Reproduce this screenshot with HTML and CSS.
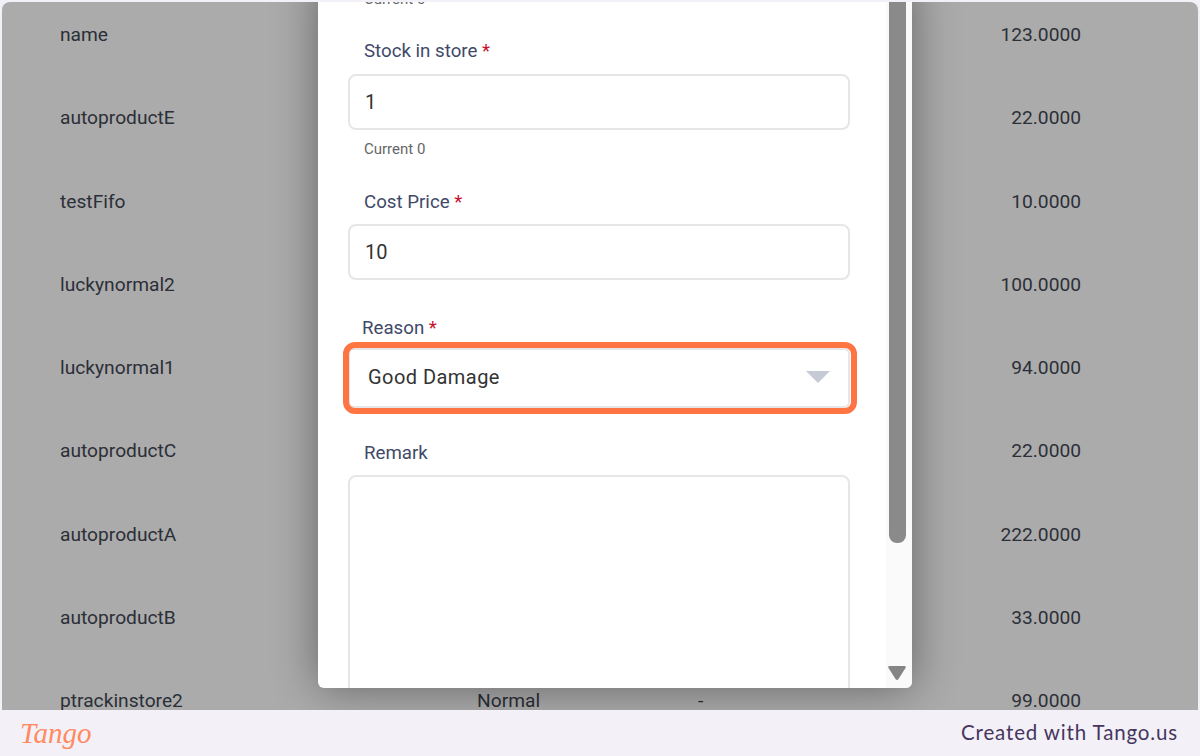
FILE: index.html
```html
<!DOCTYPE html>
<html lang="en">
<head>
    <meta charset="UTF-8">
    <meta name="viewport" content="width=device-width, initial-scale=1.0">
    <title>Stock adjustment</title>
    <link rel="stylesheet" href="styles.css">
</head>
<body>

<div class="shot">
    <!-- Product list behind the dialog -->
    <div class="product-list">
        <div class="product-row"><span>name</span><span></span><span></span><span class="price">123.0000</span></div>
        <div class="product-row"><span>autoproductE</span><span></span><span></span><span class="price">22.0000</span></div>
        <div class="product-row"><span>testFifo</span><span></span><span></span><span class="price">10.0000</span></div>
        <div class="product-row"><span>luckynormal2</span><span></span><span></span><span class="price">100.0000</span></div>
        <div class="product-row"><span>luckynormal1</span><span></span><span></span><span class="price">94.0000</span></div>
        <div class="product-row"><span>autoproductC</span><span></span><span></span><span class="price">22.0000</span></div>
        <div class="product-row"><span>autoproductA</span><span></span><span></span><span class="price">222.0000</span></div>
        <div class="product-row"><span>autoproductB</span><span></span><span></span><span class="price">33.0000</span></div>
        <div class="product-row"><span>ptrackinstore2</span><span>Normal</span><span>-</span><span class="price">99.0000</span></div>
    </div>

    <!-- Dialog, scrolled part way down -->
    <div class="dialog">
        <form class="dialog-form">
            <p class="hint hint-clipped">Current 0</p>

            <div class="field field-stock">
                <label class="field-label">Stock in store <span class="required">*</span></label>
                <input class="text-input" type="text" value="1">
                <p class="hint">Current 0</p>
            </div>

            <div class="field field-cost">
                <label class="field-label">Cost Price <span class="required">*</span></label>
                <input class="text-input" type="text" value="10">
            </div>

            <div class="field field-reason">
                <label class="field-label">Reason <span class="required">*</span></label>
                <div class="select-box">
                    <span>Good Damage</span>
                    <svg class="select-arrow" width="24" height="12" viewBox="0 0 24 12"><path d="M0 0H24L12 12Z" fill="#c5cad4"/></svg>
                </div>
                <div class="highlight"></div>
            </div>

            <div class="field field-remark">
                <label class="field-label">Remark</label>
                <textarea class="text-area"></textarea>
            </div>
        </form>

        <div class="scrollbar">
            <div class="scroll-thumb"></div>
            <svg class="scroll-arrow" width="20" height="16" viewBox="0 0 20 16"><path d="M2.5 1H17.5Q19.5 1 18.5 3L11.5 14Q10 16 8.5 14L1.5 3Q.5 1 2.5 1Z" fill="#858585"/></svg>
        </div>
    </div>
</div>

<footer class="tango-bar">
    <span class="tango-logo">Tango</span>
    <span class="tango-credit">Created with Tango.us</span>
</footer>

</body>
</html>
```

FILE: styles.css
```css
* {
    box-sizing: border-box;
}

body {
    margin: 0;
    height: 756px;
    overflow: hidden;
    display: flex;
    flex-direction: column;
    background-color: #f3f1f7;
    font-family: Roboto, sans-serif;
}

.shot {
    position: relative;
    flex: 1;
    margin: 2px 2px 0;
    overflow: hidden;
    border-radius: 8px 8px 0 0;
    background-color: #ababab;
}

.product-list {
    margin-top: -9px;
    padding: 0 117px 0 58px;
    font-size: 19.2px;
    color: #2b2f38;
}

.product-row {
    display: grid;
    grid-template-columns: 417px 221px 1fr 120px;
    align-items: center;
    height: 83.25px;
}

.price {
    text-align: right;
}

.dialog {
    position: absolute;
    top: -24px;
    left: 316px;
    width: 594px;
    height: 710px;
    display: flex;
    overflow: hidden;
    border-radius: 0 0 6px 6px;
    background-color: #fff;
    box-shadow: 0 0 45px rgba(0, 0, 0, 0.42);
}

.dialog-form {
    flex: 1;
    padding: 0 36px 0 30px;
}

.field {
    position: relative;
}

.field-label {
    display: block;
    margin: 0 0 10px 16px;
    line-height: 24px;
    font-size: 18.7px;
    color: #3f4a68;
}

.required {
    color: #c8102e;
}

.text-input,
.text-area {
    display: block;
    width: 100%;
    border: 2px solid #e6e6e6;
    border-radius: 8px;
    outline: none;
    font-family: Roboto, sans-serif;
    font-size: 20px;
    color: #333;
    background-color: #fff;
}

.text-input {
    height: 56px;
    padding: 0 15px;
}

.text-area {
    height: 260px;
    resize: none;
}

.hint {
    margin: 10px 0 0 16px;
    line-height: 18px;
    font-size: 15px;
    color: #666;
}

.hint-clipped {
    margin-top: 12px;
}

.field-stock {
    margin-top: 31px;
}

.field-stock .field-label {
    margin-bottom: 11px;
}

.field-cost {
    margin-top: 32px;
}

.field-reason {
    margin-top: 36px;
}

.field-reason .field-label {
    margin-left: 14px;
    margin-bottom: 8px;
}

.select-box {
    height: 60px;
    display: flex;
    align-items: center;
    justify-content: space-between;
    padding: 0 18px 2px 18px;
    border: 2px solid #e6e6e6;
    border-radius: 6px;
    font-size: 20px;
    letter-spacing: 0.45px;
    color: #333;
}

.highlight {
    position: absolute;
    left: -5px;
    right: -7px;
    bottom: -6px;
    height: 72px;
    border: 6px solid #ff7443;
    border-radius: 12px;
}

.field-remark {
    margin-top: 33px;
}

.scrollbar {
    position: relative;
    flex: 0 0 26px;
    background-color: #fafafa;
}

.scroll-thumb {
    width: 17px;
    height: 565px;
    margin-left: 3px;
    border-radius: 0 0 8px 8px;
    background-color: #8a8a8a;
}

.scroll-arrow {
    position: absolute;
    left: 1px;
    bottom: 7px;
}

.tango-bar {
    flex: 0 0 46px;
    display: flex;
    align-items: center;
    justify-content: space-between;
    padding: 0 22px 0 20px;
}

.tango-logo {
    font-family: "Liberation Serif", serif;
    font-style: italic;
    font-size: 29px;
    color: #ff8a63;
}

.tango-credit {
    font-family: Lato, sans-serif;
    font-size: 20.5px;
    letter-spacing: 0.85px;
    color: #46365f;
    margin-bottom: 2px;
}
```
